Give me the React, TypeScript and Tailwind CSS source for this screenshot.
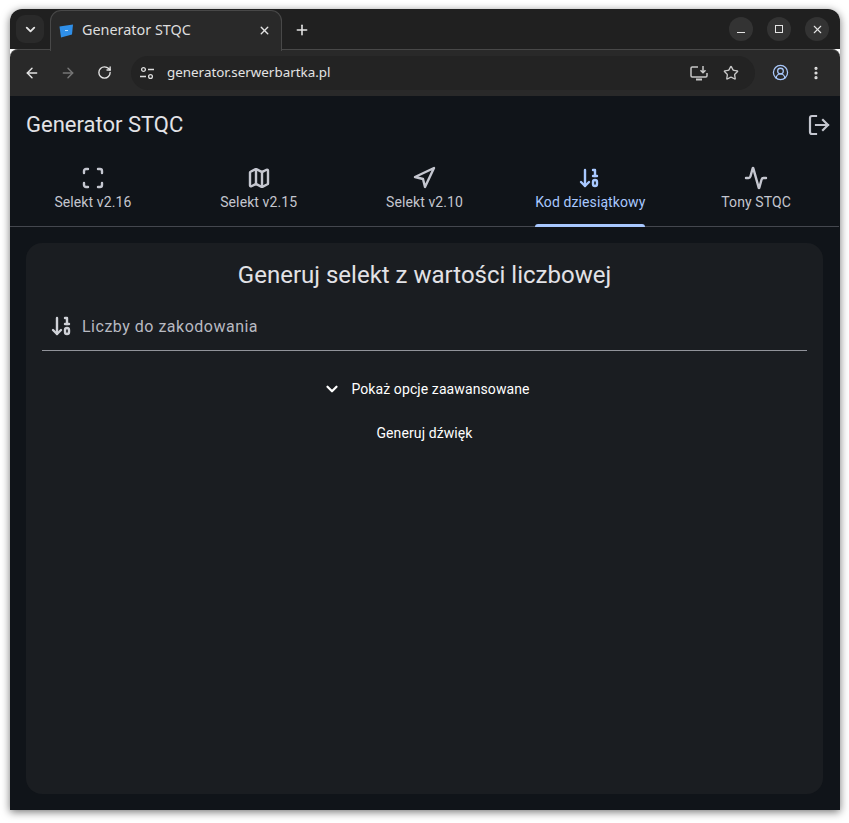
import { ArrowDown10, Activity, ArrowLeft, ArrowRight, ChevronDown, CircleUserRound, EllipsisVertical, LogOut, Map, Navigation, Plus, RotateCw, Scan, Star, X } from "lucide-react";

const tabs = [
  { label: "Selekt v2.16", icon: Scan },
  { label: "Selekt v2.15", icon: Map },
  { label: "Selekt v2.10", icon: Navigation },
  { label: "Kod dziesiątkowy", icon: ArrowDown10, active: true },
  { label: "Tony STQC", icon: Activity },
];

function TabStrip() {
  return (
    <div className="flex h-[40px] items-center bg-[#202020] pl-[6px] pr-[11px]">
      <div className="flex h-[28px] w-[28px] items-center justify-center rounded-[9px] bg-[#2a2a2a] text-[#e3e3e3]">
        <ChevronDown size={15} strokeWidth={3} />
      </div>
      <div className="relative z-10 ml-[6px] mt-[1px] flex h-[41px] w-[232px] items-center self-start rounded-t-[11px] border border-b-0 border-[#484848] bg-[#292929] pl-[8px] pr-[10px]">
        <svg width="15" height="14" viewBox="0 0 15 14" className="mr-[8px] mt-[-1px] shrink-0">
          <path d="M0.5 2.5 L14 0.5 L13 10.5 L2 13.5 Z" fill="#2f8fe8" />
          <path d="M6 6.5h3" stroke="#b7dcfb" strokeWidth="1" />
        </svg>
        <span className="mt-[-1px] flex-1 font-['Noto_Sans'] text-[14.4px] leading-none text-[#dddddd]">Generator STQC</span>
        <X size={13} strokeWidth={2.6} className="mt-[-1px] text-[#e3e3e3]" />
      </div>
      <Plus size={16} strokeWidth={2.4} className="ml-[12px] mt-[1px] text-[#e3e3e3]" />
      <div className="ml-auto flex items-center gap-[14px] text-[#e3e3e3]">
        <div className="flex h-[24px] w-[24px] items-center justify-center rounded-full bg-[#333333]">
          <span className="mt-[6px] h-[1px] w-[8px] bg-[#e3e3e3]" />
        </div>
        <div className="flex h-[24px] w-[24px] items-center justify-center rounded-full bg-[#333333]">
          <span className="h-[8px] w-[8px] border border-[#e3e3e3]" />
        </div>
        <div className="flex h-[24px] w-[24px] items-center justify-center rounded-full bg-[#333333]">
          <X size={13} strokeWidth={2} />
        </div>
      </div>
    </div>
  );
}

function Toolbar() {
  return (
    <div className="flex h-[47px] items-center rounded-t-[8px] border-t border-[#484848] bg-[#292929] pb-[1px] text-[#e3e3e3]">
      <ArrowLeft size={16} strokeWidth={2.2} className="ml-[14px]" />
      <ArrowRight size={16} strokeWidth={2.2} className="ml-[20px] text-[#767676]" />
      <RotateCw size={15} strokeWidth={2.2} className="ml-[21px]" />
      <div className="ml-[19px] flex h-[34px] w-[624px] items-center rounded-full bg-[#232323] pl-[8px]">
        <svg width="16" height="16" viewBox="0 0 16 16" fill="none" stroke="#dddddd" strokeWidth="1.3" className="shrink-0">
          <circle cx="4.5" cy="4.5" r="1.9" />
          <path d="M9 4.5h6M1 11.5h6" />
          <circle cx="11.5" cy="11.5" r="1.9" />
        </svg>
        <span className="ml-[12px] font-['Noto_Sans'] text-[13.4px] leading-none text-[#e3e3e3]">generator.serwerbartka.pl</span>
        <svg width="18" height="16" viewBox="0 0 18 16" fill="none" stroke="#c7c7c7" strokeWidth="1.5" className="ml-auto shrink-0">
          <path d="M8 2H2.2A1.2 1.2 0 0 0 1 3.2v7.6A1.2 1.2 0 0 0 2.2 12h13.6a1.2 1.2 0 0 0 1.2-1.2V8" />
          <path d="M13 1v6.5M10.5 5.2 13 7.7l2.5-2.5" />
          <path d="M6 14.5h6" strokeWidth="2" />
        </svg>
        <Star size={16} strokeWidth={2} className="ml-[15px] mr-[16px] text-[#c7c7c7]" />
      </div>
      <CircleUserRound size={17} strokeWidth={1.8} className="ml-[17px] text-[#a8c7fa]" />
      <EllipsisVertical size={16} strokeWidth={2.8} className="ml-[19px]" />
    </div>
  );
}

function AppHeader() {
  return (
    <div className="flex h-[56px] items-center justify-between pl-[16px] pr-[8px] pt-[1px] text-[#e2e2e6]">
      <h1 className="text-[22px] font-normal leading-[28px]">Generator STQC</h1>
      <LogOut size={24} strokeWidth={2.2} strokeLinecap="square" strokeLinejoin="miter" className="text-[#c4c6cf]" />
    </div>
  );
}

function TabBar() {
  return (
    <div className="grid h-[75px] grid-cols-5 border-b border-[#44474e]">
      {tabs.map((t) => {
        const Icon = t.icon;
        return (
          <div key={t.label} className={t.active ? "flex flex-col items-center text-[#a8c8ff]" : "flex flex-col items-center text-[#c4c6cf]"}>
            <div className="relative flex h-[74px] flex-col items-center pt-[14px]">
              <Icon size={24} strokeWidth={2.4} />
              <span className="mt-[2px] text-[14px] font-normal leading-[20px] tracking-[0.1px]">{t.label}</span>
              {t.active && <span className="absolute bottom-[-1px] left-0 right-0 h-[3px] rounded-t-[3px] bg-[#a8c8ff]" />}
            </div>
          </div>
        );
      })}
    </div>
  );
}

function Card() {
  return (
    <div className="mx-[16px] mb-[16px] mt-[16px] flex-1 rounded-[16px] bg-[#1a1d21] px-[16px] pt-[16px] text-[#e2e2e6]">
      <h2 className="text-center text-[24px] font-normal leading-[32px]">Generuj selekt z wartości liczbowej</h2>
      <div className="mt-[11px] flex h-[49px] items-center border-b border-[#c4c6cf]/70 pl-[8px] text-[#d0d2d8]">
        <ArrowDown10 size={24} strokeWidth={2.4} />
        <span className="ml-[8px] pt-[1px] text-[16px] leading-[24px] tracking-[0.5px] text-[#b8bac2]">Liczby do zakodowania</span>
      </div>
      <div className="mt-[18px] flex h-[40px] items-center justify-center pl-[4px] text-[14px] font-normal tracking-[0.1px] text-white">
        <ChevronDown size={18} strokeWidth={3} className="mr-[10px]" />
        <span>Pokaż opcje zaawansowane</span>
      </div>
      <div className="mt-[4px] flex h-[40px] items-center justify-center text-[14px] font-normal tracking-[0.1px] text-white">
        Generuj dźwięk
      </div>
    </div>
  );
}

export default function App() {
  return (
    <div className="h-[823px] w-[849px] overflow-hidden bg-white pl-[10px] pt-[9px] font-['Roboto',sans-serif]">
      <div className="flex h-[801px] w-[830px] flex-col overflow-hidden rounded-t-[12px] shadow-[0_2px_8px_rgba(0,0,0,0.55)]">
        <TabStrip />
        <Toolbar />
        <div className="flex flex-1 flex-col bg-[#101419] pr-[1px]">
          <AppHeader />
          <TabBar />
          <Card />
        </div>
      </div>
    </div>
  );
}
